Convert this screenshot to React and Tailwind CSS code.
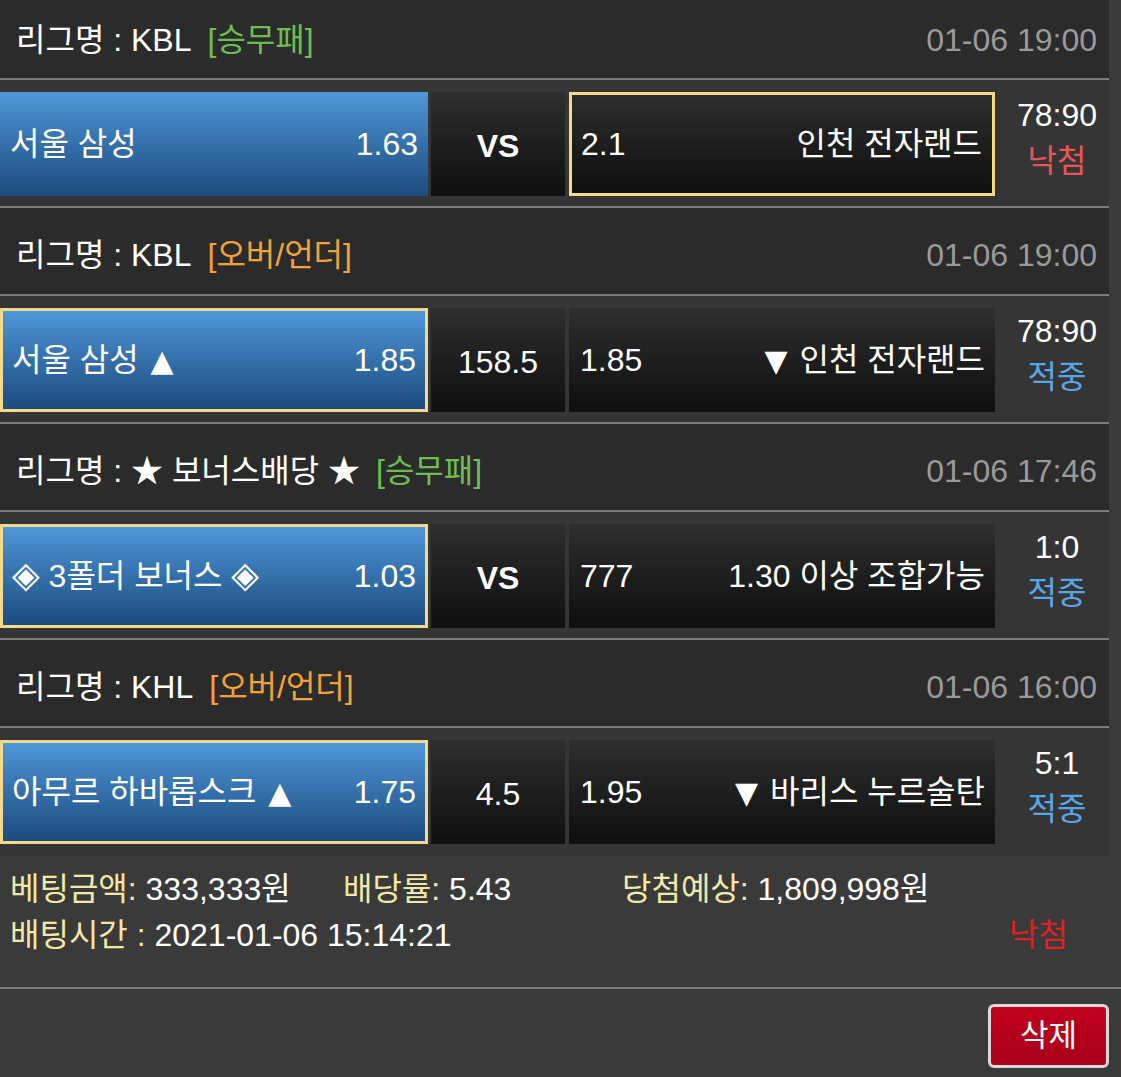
const font = { fontFamily: '"Liberation Sans", "Noto Sans CJK KR", sans-serif' };

const matches = [
  {
    league: "KBL",
    type: "[승무패]",
    typeColor: "text-[#6cbf4e]",
    date: "01-06 19:00",
    home: "서울 삼성",
    homeOdds: "1.63",
    mid: "VS",
    awayOdds: "2.1",
    away: "인천 전자랜드",
    pick: "away",
    score: "78:90",
    result: "낙첨",
    resultColor: "text-[#e85555]",
  },
  {
    league: "KBL",
    type: "[오버/언더]",
    typeColor: "text-[#f3a23a]",
    date: "01-06 19:00",
    home: "서울 삼성 ▲",
    homeOdds: "1.85",
    mid: "158.5",
    awayOdds: "1.85",
    away: "▼ 인천 전자랜드",
    pick: "home",
    score: "78:90",
    result: "적중",
    resultColor: "text-[#5aa5e5]",
  },
  {
    league: "★ 보너스배당 ★",
    type: "[승무패]",
    typeColor: "text-[#6cbf4e]",
    date: "01-06 17:46",
    home: "◈ 3폴더 보너스 ◈",
    homeOdds: "1.03",
    mid: "VS",
    awayOdds: "777",
    away: "1.30 이상 조합가능",
    pick: "home",
    score: "1:0",
    result: "적중",
    resultColor: "text-[#5aa5e5]",
  },
  {
    league: "KHL",
    type: "[오버/언더]",
    typeColor: "text-[#f3a23a]",
    date: "01-06 16:00",
    home: "아무르 하바롭스크 ▲",
    homeOdds: "1.75",
    mid: "4.5",
    awayOdds: "1.95",
    away: "▼ 바리스 누르술탄",
    pick: "home",
    score: "5:1",
    result: "적중",
    resultColor: "text-[#5aa5e5]",
  },
];

// bigger symbol glyphs, like the original font draws them
function Label({ text }) {
  return text.split(/([▲▼◈])/).map((part, k) => {
    if (part === "◈")
      return (
        <span key={k} className="font-['DejaVu_Sans'] text-[36px] leading-none">
          {part}
        </span>
      );
    if (part === "▲" || part === "▼")
      return (
        <span key={k} className="font-['DejaVu_Sans'] text-[30px] leading-none px-[3px]">
          {part}
        </span>
      );
    return <span key={k}>{part}</span>;
  });
}

function MatchBlock({ m, i, last }) {
  const homeSel = m.pick === "home";
  const awaySel = m.pick === "away";
  return (
    <div>
      <div
        className={`flex items-center justify-between bg-[#2b2b2b] border-b-2 border-[#7c7c7c] pl-4 pr-3 ${
          i === 0 ? "h-[80px] pt-[2px]" : "h-[88px] pt-2"
        }`}
      >
        <div className="flex items-center">
          <span>리그명 : {m.league}</span>
          <span className={`ml-4 ${m.typeColor}`}>{m.type}</span>
        </div>
        <span className="text-[#9a9a9a]">{m.date}</span>
      </div>

      <div
        className={`flex items-start bg-[#353535] pt-3 h-[128px] ${
          last ? "" : "border-b-2 border-[#7c7c7c]"
        }`}
      >
        <div
          className={`w-[428px] h-[104px] flex items-center justify-between bg-linear-to-b from-[#4f97d8] to-[#1c4b7f] ${
            homeSel ? "border-[3px] border-[#f7d98c] px-[9px]" : "px-[10px]"
          }`}
        >
          <span className="whitespace-pre">
            <Label text={m.home} />
          </span>
          <span>{m.homeOdds}</span>
        </div>
        <div
          className={`ml-[3px] w-[134px] h-[104px] flex items-center justify-center bg-linear-to-b from-[#2e2e2e] to-[#0f0f0f] pt-1 ${
            m.mid === "VS" ? "font-bold" : ""
          }`}
        >
          {m.mid}
        </div>
        <div
          className={`ml-[4px] w-[426px] h-[104px] flex items-center justify-between bg-linear-to-b from-[#2e2e2e] to-[#0f0f0f] ${
            awaySel ? "border-[3px] border-[#f7d98c] pl-[9px] pr-[10px]" : "pl-[11px] pr-[10px]"
          }`}
        >
          <span>{m.awayOdds}</span>
          <span className="whitespace-pre">
            <Label text={m.away} />
          </span>
        </div>
        <div className="w-[114px] pl-[10px] flex flex-col items-center leading-[46px]">
          <span>{m.score}</span>
          <span className={m.resultColor}>{m.result}</span>
        </div>
      </div>
    </div>
  );
}

export default function App() {
  return (
    <div className="min-h-screen bg-[#3a3a3a] text-white text-[32px]" style={font}>
      <div className="w-[1109px]">
        {matches.map((m, i) => (
          <MatchBlock key={i} m={m} i={i} last={i === matches.length - 1} />
        ))}
      </div>

      <div className="h-[133px] pt-[10px] pl-[10px] leading-[46px] border-b-2 border-[#7c7c7c]">
        <div className="flex">
          <div className="w-[333px]">
            <span className="text-[#f2e8a8]">베팅금액:</span> 333,333원
          </div>
          <div className="w-[279px]">
            <span className="text-[#f2e8a8]">배당률:</span> 5.43
          </div>
          <div>
            <span className="text-[#f2e8a8]">당첨예상:</span> 1,809,998원
          </div>
        </div>
        <div className="flex">
          <div>
            <span className="text-[#f2e8a8]">배팅시간 :</span> 2021-01-06 15:14:21
          </div>
          <span className="ml-auto mr-[53px] text-[#e0201e]">낙첨</span>
        </div>
      </div>

      <div className="flex justify-end pt-[15px] pr-[12px] pb-2">
        <button className="w-[121px] h-[64px] rounded-md border-[3px] border-[#d9d9d9] bg-linear-to-b from-[#c0001f] to-[#a80018] text-white text-[31px]">
          삭제
        </button>
      </div>
    </div>
  );
}
